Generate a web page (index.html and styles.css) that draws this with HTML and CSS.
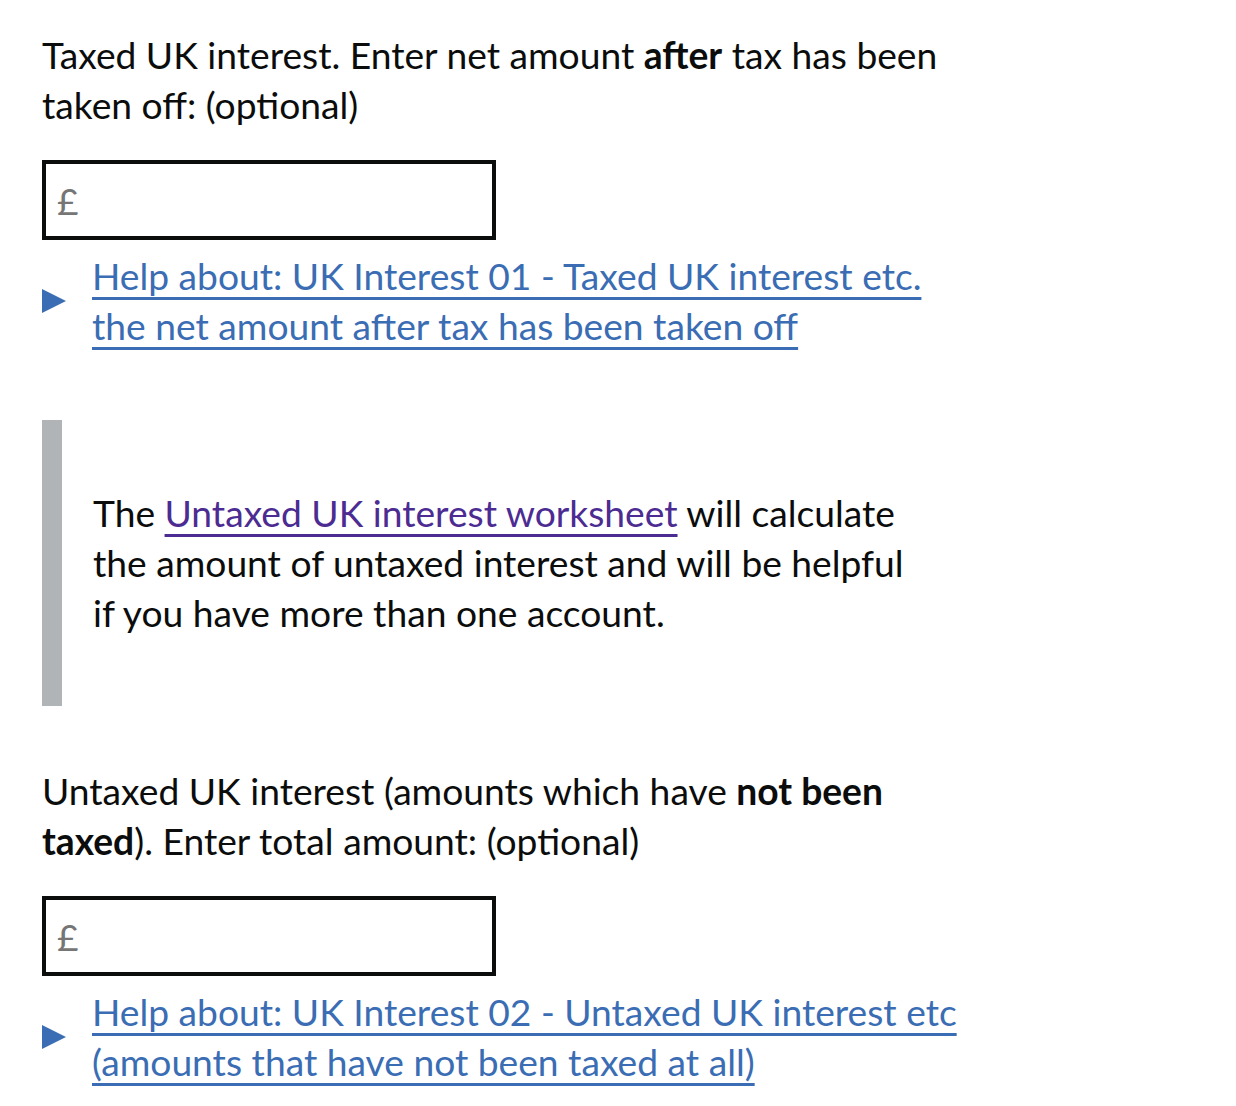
FILE: index.html
```html
<!DOCTYPE html>
<html lang="en">
<head>
<meta charset="utf-8">
<title>Interest</title>
<link rel="stylesheet" href="styles.css">
</head>
<body>
<main class="page">
  <div class="field">
    <label class="label" for="taxed">Taxed UK interest. Enter net amount <b>after</b> tax has been taken off: (optional)</label>
    <div class="input"><span class="prefix">£</span><input id="taxed" class="input-el" type="text"></div>
    <div class="details">
      <span class="arrow-wrap"><span class="arrow"></span></span>
      <a class="link" href="#">Help about: UK Interest 01 - Taxed UK interest etc. the net amount after tax has been taken off</a>
    </div>
  </div>

  <div class="inset">
    <p class="inset-text">The <a class="link-visited" href="#">Untaxed UK interest worksheet</a> will calculate the amount of untaxed interest and will be helpful if you have more than one account.</p>
  </div>

  <div class="field">
    <label class="label" for="untaxed">Untaxed UK interest (amounts which have <b>not been taxed</b>). Enter total amount: (optional)</label>
    <div class="input"><span class="prefix">£</span><input id="untaxed" class="input-el" type="text"></div>
    <div class="details">
      <span class="arrow-wrap"><span class="arrow"></span></span>
      <a class="link" href="#">Help about: UK Interest 02 - Untaxed UK interest etc (amounts that have not been taxed at all)</a>
    </div>
  </div>
</main>
</body>
</html>
```
FILE: styles.css
```css
html, body {
  margin: 0;
  padding: 0;
  background: #ffffff;
}
.page {
  width: 920px;
  padding: 30px 0 0 42px;
  font-family: Lato, "Open Sans", sans-serif;
  font-size: 37.2px;
  line-height: 50px;
  color: #0b0c0c;
}
.field {
  display: flex;
  flex-direction: column;
}
.label {
  display: block;
  margin-bottom: 30px;
}
.label b {
  font-weight: 700;
}
.input {
  box-sizing: border-box;
  width: 454px;
  height: 80px;
  border: 4px solid #0b0c0c;
  display: flex;
  align-items: center;
  padding-left: 11px;
}
.prefix {
  color: #767676;
  font-size: 37px;
  line-height: 1;
}
.input-el {
  flex: 1;
  border: 0;
  outline: none;
  background: transparent;
  font: inherit;
  height: 100%;
  padding: 0 8px;
}
.details {
  display: flex;
  align-items: center;
  margin-top: 11px;
}
.arrow-wrap {
  flex: 0 0 50px;
  display: flex;
  align-items: center;
}
.arrow {
  width: 0;
  height: 0;
  border-left: 24px solid #3a6db3;
  border-top: 12.5px solid transparent;
  border-bottom: 12.5px solid transparent;
}
.link {
  color: #3a6db3;
  text-decoration: underline;
  text-decoration-thickness: 3px;
  text-underline-offset: 7px;
}
.inset {
  margin: 69px 40px 60px 0;
  border-left: 20px solid #b1b4b6;
  padding: 68px 0 68px 31px;
}
.inset-text {
  margin: 0;
}
.link-visited {
  color: #4c2c92;
  text-decoration: underline;
  text-decoration-thickness: 3px;
  text-underline-offset: 7px;
}
```
